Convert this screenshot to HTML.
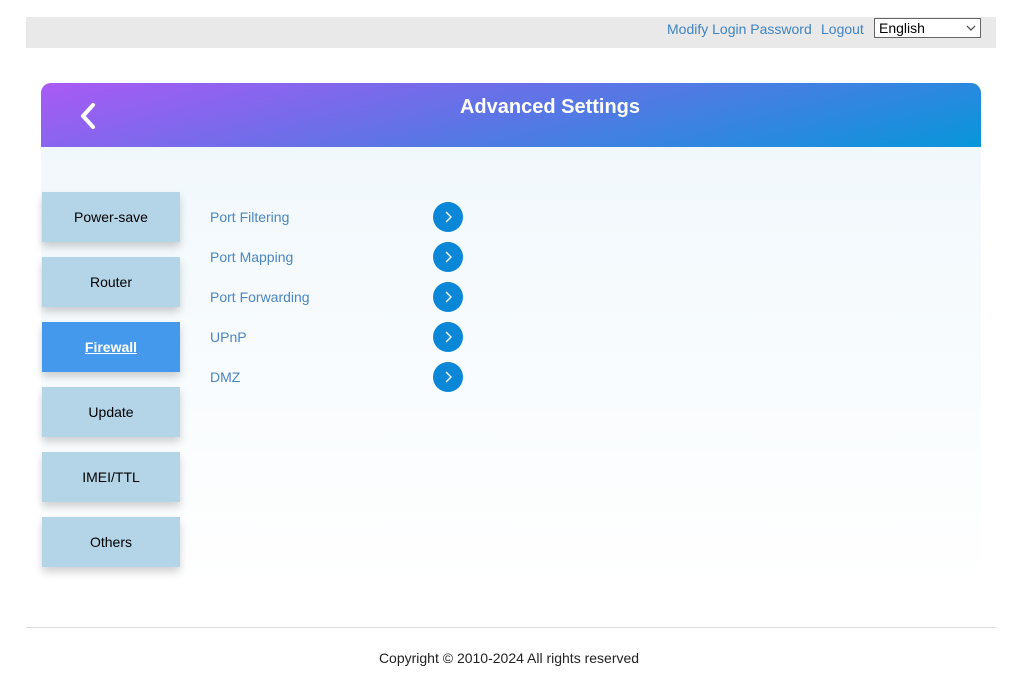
<!DOCTYPE html>
<html><head><meta charset="utf-8"><style>
*{margin:0;padding:0;box-sizing:border-box}
body{width:1018px;height:687px;background:#fff;font-family:"Liberation Sans",Arial,sans-serif;position:relative;overflow:hidden}
.top{position:absolute;left:26px;top:17px;width:970px;height:31px;background:#e9e9e9}
.top a{position:absolute;top:4px;font-size:14px;color:#3f83c1;text-decoration:none}
.sel{position:absolute;left:848px;top:1px;width:107px;height:20px;border:1px solid #666;background:#fff;font-size:14px;padding-left:4px;line-height:18px;color:#000}
.sel svg{position:absolute;right:4px;top:6px}
.head{position:absolute;left:41px;top:83px;width:940px;height:64px;border-radius:10px 10px 0 0;background:linear-gradient(165deg,#a95af5 0%,#6b6fe8 40%,#3a83e0 70%,#0796da 100%)}
.head h1{position:absolute;left:78px;right:0;top:13px;text-align:center;color:#fff;font-size:20px;font-weight:bold}
.body{position:absolute;left:41px;top:147px;width:940px;height:440px;background:linear-gradient(#f1f8fc,#fff)}
.tab{position:absolute;left:42px;width:138px;height:50px;background:#b4d4e7;font-size:14px;text-align:center;line-height:50px;color:#000;box-shadow:0 5px 8px rgba(0,0,0,.18)}
.tab.on{background:#4599ec;color:#fff;font-weight:bold;text-decoration:underline}
.it{position:absolute;left:210px;font-size:14px;color:#4a86c0}
.ci{position:absolute;left:433px;width:30px;height:30px;border-radius:50%;background:#0a87d6}
.hr{position:absolute;left:26px;top:627px;width:970px;height:1px;background:#ddd}
.foot{position:absolute;left:0;right:0;top:650px;text-align:center;font-size:14px;color:#222}
</style></head><body>
<div class="top">
<a style="left:641px">Modify Login Password</a>
<a style="left:795px">Logout</a>
<div class="sel">English<svg width="10" height="7"><path d="M1 1 L5 5 L9 1" stroke="#444" stroke-width="1.2" fill="none"/></svg></div>
</div>
<div class="head">
<svg style="position:absolute;left:38px;top:20px" width="18" height="26" viewBox="0 0 18 26"><path d="M14 2 L4 13 L14 24" stroke="#fff" stroke-width="4" fill="none" stroke-linecap="round" stroke-linejoin="round"/></svg>
<h1>Advanced Settings</h1>
</div>
<div class="body"></div>
<div class="tab" style="top:192px">Power-save</div>
<div class="tab" style="top:257px">Router</div>
<div class="tab on" style="top:322px">Firewall</div>
<div class="tab" style="top:387px">Update</div>
<div class="tab" style="top:452px">IMEI/TTL</div>
<div class="tab" style="top:517px">Others</div>
<div class="it" style="top:209px">Port Filtering</div>
<div class="it" style="top:249px">Port Mapping</div>
<div class="it" style="top:289px">Port Forwarding</div>
<div class="it" style="top:329px">UPnP</div>
<div class="it" style="top:369px">DMZ</div>
<div class="ci" style="top:202px"><svg width="30" height="30"><path d="M13 10 L18 15 L13 20" stroke="#fff" stroke-width="1.4" fill="none"/></svg></div>
<div class="ci" style="top:242px"><svg width="30" height="30"><path d="M13 10 L18 15 L13 20" stroke="#fff" stroke-width="1.4" fill="none"/></svg></div>
<div class="ci" style="top:282px"><svg width="30" height="30"><path d="M13 10 L18 15 L13 20" stroke="#fff" stroke-width="1.4" fill="none"/></svg></div>
<div class="ci" style="top:322px"><svg width="30" height="30"><path d="M13 10 L18 15 L13 20" stroke="#fff" stroke-width="1.4" fill="none"/></svg></div>
<div class="ci" style="top:362px"><svg width="30" height="30"><path d="M13 10 L18 15 L13 20" stroke="#fff" stroke-width="1.4" fill="none"/></svg></div>
<div class="hr"></div>
<div class="foot">Copyright © 2010-2024 All rights reserved</div>
</body></html>
